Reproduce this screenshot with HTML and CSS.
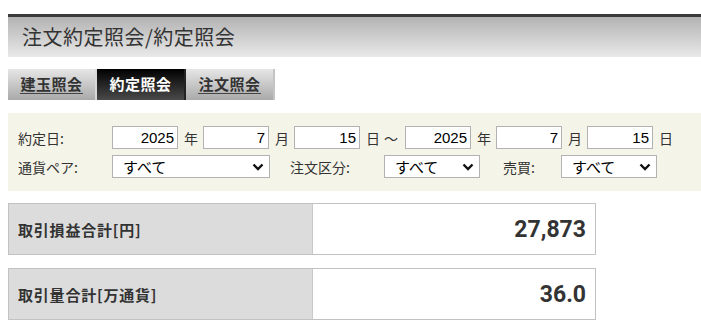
FILE: index.html
```html
<!DOCTYPE html>
<html lang="ja">
<head>
<meta charset="utf-8">
<title>約定照会</title>
<link rel="stylesheet" href="styles.css">
</head>
<body>
<div class="page">
  <div class="header"><h1 class="title">注文約定照会/約定照会</h1></div>

  <div class="tabs">
    <a class="tab" href="#"><span class="tab-text">建玉照会</span></a>
    <a class="tab active" href="#"><span class="tab-text">約定照会</span></a>
    <a class="tab" href="#"><span class="tab-text">注文照会</span></a>
  </div>

  <div class="filter">
    <div class="row">
      <span class="lbl">約定日:</span>
      <input class="num" type="text" value="2025"><span class="unit">年</span>
      <input class="num" type="text" value="7"><span class="unit">月</span>
      <input class="num" type="text" value="15"><span class="unit">日</span><span class="tilde">～</span>
      <input class="num" type="text" value="2025"><span class="unit">年</span>
      <input class="num" type="text" value="7"><span class="unit">月</span>
      <input class="num" type="text" value="15"><span class="unit">日</span>
    </div>
    <div class="row">
      <span class="lbl">通貨ペア:</span>
      <span class="sel wide"><select><option>すべて</option></select><svg class="chev" viewBox="0 0 12 8" width="12" height="8"><path d="M1.5 1.5 L6 6 L10.5 1.5" fill="none" stroke="#111" stroke-width="2.4"/></svg></span>
      <span class="lbl2">注文区分:</span>
      <span class="sel"><select><option>すべて</option></select><svg class="chev" viewBox="0 0 12 8" width="12" height="8"><path d="M1.5 1.5 L6 6 L10.5 1.5" fill="none" stroke="#111" stroke-width="2.4"/></svg></span>
      <span class="lbl3">売買:</span>
      <span class="sel"><select><option>すべて</option></select><svg class="chev" viewBox="0 0 12 8" width="12" height="8"><path d="M1.5 1.5 L6 6 L10.5 1.5" fill="none" stroke="#111" stroke-width="2.4"/></svg></span>
    </div>
  </div>

  <div class="sum">
    <div class="sum-label">取引損益合計[円]</div>
    <div class="sum-value">27,873</div>
  </div>
  <div class="sum">
    <div class="sum-label">取引量合計[万通貨]</div>
    <div class="sum-value">36.0</div>
  </div>
</div>
</body>
</html>
```

FILE: styles.css
```css
html, body { margin: 0; padding: 0; background: #fff; }
body {
  padding: 14px 0 0 8px;
  font-family: "Noto Sans CJK JP", "Liberation Sans", sans-serif;
  color: #333;
  overflow: hidden;
}
.page { display: flex; flex-direction: column; }

.header {
  border-top: 3px solid #3a3a3a;
  height: 40px;
  background: linear-gradient(#b3b3b3, #e9e9e9);
  display: flex;
  align-items: center;
}
.title {
  margin: 0 0 0 14px;
  font-size: 20px;
  font-weight: normal;
  color: #333;
  letter-spacing: 0.5px;
  line-height: 1;
}

.tabs {
  display: flex;
  margin-top: 12px;
  height: 31px;
}
.tab {
  width: 87px;
  height: 31px;
  border-right: 2px solid #d8d8d8;
  background: linear-gradient(#e6e6e6, #a9a9a9);
  color: #333;
  font-size: 15px;
  font-weight: bold;
  display: flex;
  align-items: center;
  justify-content: center;
  letter-spacing: 0.5px;
  text-decoration: none;
}
.tab-text {
  line-height: 18px;
  border-bottom: 1px solid #444;
}
.tab:last-child { border-right-color: #c4c4c4; }
.tab.active {
  background: linear-gradient(#000, #4a4a4a);
  color: #fff;
  border-right-color: #222;
}
.tab.active .tab-text { border-bottom-color: transparent; }

.filter {
  margin-top: 13px;
  background: #f5f4e8;
  padding: 13px 0 13px 10px;
  display: flex;
  flex-direction: column;
  gap: 6px;
}
.row { display: flex; align-items: center; height: 23px; }
.lbl { width: 94px; font-size: 14px; color: #333; }
.num {
  box-sizing: border-box;
  width: 66px;
  height: 23px;
  border: 1px solid #b2b2b2;
  background: #fff;
  text-align: right;
  padding: 0 3px;
  font-family: "Liberation Sans", Arial, sans-serif;
  font-size: 15px;
  color: #000;
  margin: 0;
}
.unit { font-size: 14px; width: 14px; margin: 0 5px 0 6px; }
.unit:nth-of-type(3n) { margin-right: 5px; }
.tilde { font-size: 14px; width: 14px; margin: 0 7px 0 -1px; }

.sel { position: relative; display: inline-flex; }
.sel select {
  appearance: none;
  -webkit-appearance: none;
  box-sizing: border-box;
  width: 96px;
  height: 23px;
  border: 1px solid #b2b2b2;
  background: #fff;
  padding: 0 0 0 10px;
  font-family: "Noto Sans CJK JP", sans-serif;
  font-size: 15px;
  color: #000;
  margin: 0;
}
.sel.wide select { width: 158px; }
.chev { position: absolute; right: 6px; top: 8px; }
.lbl2 { font-size: 14px; margin-left: 20px; width: 94px; }
.lbl3 { font-size: 14px; margin-left: 23px; width: 58px; }

.sum {
  display: flex;
  width: 588px;
  height: 52px;
  box-sizing: border-box;
  border: 1px solid #c2c2c2;
  margin-top: 12px;
}
.sum + .sum { margin-top: 13px; }
.sum-label {
  box-sizing: border-box;
  width: 304px;
  background: #dcdcdc;
  border-right: 1px solid #c9c9c9;
  display: flex;
  align-items: center;
  padding-left: 9px;
  font-size: 15px;
  font-weight: bold;
  letter-spacing: 0.8px;
  color: #333;
}
.sum-value {
  flex: 1;
  display: flex;
  align-items: center;
  justify-content: flex-end;
  padding-right: 9px;
  font-family: Roboto, "Liberation Sans", sans-serif;
  font-weight: bold;
  font-size: 23px;
  color: #333;
}
```
